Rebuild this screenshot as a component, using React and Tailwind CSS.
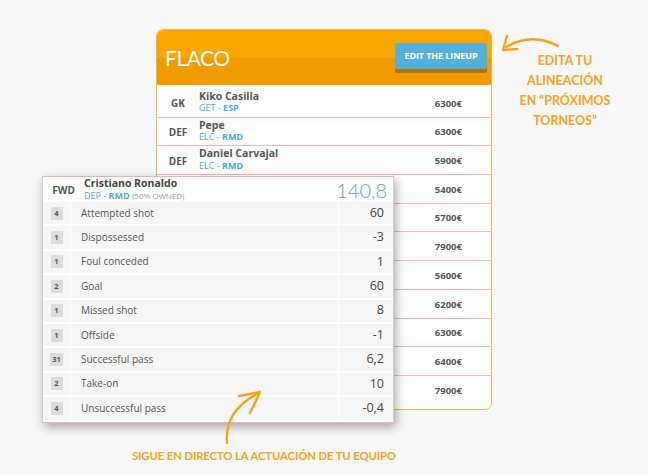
import React from "react";

const lineup = [
  { pos: "GK", name: "Kiko Casilla", a: "GET", b: "ESP", price: "6300€" },
  { pos: "DEF", name: "Pepe", a: "ELC", b: "RMD", price: "6300€" },
  { pos: "DEF", name: "Daniel Carvajal", a: "ELC", b: "RMD", price: "5900€" },
  { pos: "", name: "", a: "", b: "", price: "5400€" },
  { pos: "", name: "", a: "", b: "", price: "5700€" },
  { pos: "", name: "", a: "", b: "", price: "7900€" },
  { pos: "", name: "", a: "", b: "", price: "5600€" },
  { pos: "", name: "", a: "", b: "", price: "6200€" },
  { pos: "", name: "", a: "", b: "", price: "6300€" },
  { pos: "", name: "", a: "", b: "", price: "6400€" },
  { pos: "", name: "", a: "", b: "", price: "7900€" },
];

const stats = [
  ["4", "Attempted shot", "60"],
  ["1", "Dispossessed", "-3"],
  ["1", "Foul conceded", "1"],
  ["2", "Goal", "60"],
  ["1", "Missed shot", "8"],
  ["1", "Offside", "-1"],
  ["31", "Successful pass", "6,2"],
  ["2", "Take-on", "10"],
  ["4", "Unsuccessful pass", "-0,4"],
];

export default function App() {
  return (
    <div
      className="relative w-[648px] h-[475px] bg-[#f8f8f8] overflow-hidden"
      style={{ fontFamily: '"Open Sans", "Liberation Sans", sans-serif' }}
    >
      {/* Lineup card */}
      <div className="pt-[29px] pl-[156px]">
        <div className="w-[336px] h-[381px] rounded-[7px] border border-[#f6b450] bg-white overflow-hidden flex flex-col">
          <div className="h-[55px] shrink-0 flex items-center justify-between pl-[8px] pr-[4px] bg-[linear-gradient(to_bottom,#fca700_0,#fca700_50%,#f09b00_50%,#f09b00_100%)]">
            <span
              className="text-white text-[21px] leading-none tracking-[-0.5px]"
              style={{ fontFamily: 'Lato, "Open Sans", sans-serif' }}
            >
              FLACO
            </span>
            <div className="h-[26px] w-[92px] mt-[-3px] flex items-center justify-center bg-[#54b0da] rounded-[2px] shadow-[0_4px_0_rgba(90,70,30,0.45)] text-white text-[9px] font-bold tracking-[-0.1px]">
              EDIT THE LINEUP
            </div>
          </div>
          <div className="pt-[4px] flex flex-col">
            {lineup.map((r, i) => (
              <div
                key={i}
                className={`h-[28.7px] shrink-0 flex items-center ${
                  i < lineup.length - 1 ? "border-b border-[#f6b6b6]" : ""
                }`}
              >
                <div className="w-[42px] text-center text-[10px] font-bold text-[#555] mt-[2px]">
                  {r.pos}
                </div>
                <div className="flex flex-col mt-[-1px]">
                  <span className="text-[10.5px] leading-[12.5px] font-bold text-[#555]">{r.name}</span>
                  <span className="text-[9px] leading-[12.5px] text-[#4ea6dc]">
                    {r.a ? (
                      <>
                        {r.a} - <b className="font-bold">{r.b}</b>
                      </>
                    ) : null}
                  </span>
                </div>
                <div className="ml-auto pr-[29px] text-[9.5px] font-bold text-[#555] mt-[2px]">
                  {r.price}
                </div>
              </div>
            ))}
          </div>
        </div>
      </div>

      {/* Right annotation */}
      <div
        className="absolute left-[506px] top-[51px] w-[118px] text-center text-[12.5px] font-bold leading-[20px] text-[#f7a21b]"
        style={{ fontFamily: 'Lato, "Open Sans", sans-serif' }}
      >
        EDITA TU
        <br />
        ALINEACIÓN
        <br />
        EN “PRÓXIMOS
        <br />
        TORNEOS”
      </div>

      {/* Bottom annotation */}
      <div
        className="absolute left-0 top-[448px] w-[528px] text-center text-[11.3px] font-bold tracking-[-0.1px] text-[#f7a21b]"
        style={{ fontFamily: 'Lato, "Open Sans", sans-serif' }}
      >
        SIGUE EN DIRECTO LA ACTUACIÓN DE TU EQUIPO
      </div>

      {/* Stats panel */}
      <div className="absolute left-[42px] top-[176px] w-[352px] bg-white border-x border-[#cfcfcf] border-y border-y-[#f0b0b0] shadow-[2px_4px_10px_rgba(0,0,0,0.35)] flex flex-col">
        <div className="h-[25px] flex items-center bg-white">
          <div className="w-[41px] text-center text-[10px] font-bold text-[#555] mt-[2px]">FWD</div>
          <div className="flex flex-col">
            <span className="text-[10.5px] leading-[12.5px] font-bold text-[#444]">Cristiano Ronaldo</span>
            <span className="text-[9px] leading-[12.5px] text-[#4ea6dc]">
              DEP - <b className="font-bold">RMD</b>{" "}
              <span className="text-[8px] text-[#999]">(50% OWNED)</span>
            </span>
          </div>
          <div
            className="ml-auto pr-[6px] text-[20px] font-light leading-none text-[#5b9fd8]"
            style={{ fontFamily: 'Lato, "Open Sans", sans-serif' }}
          >
            140,8
          </div>
        </div>
        {stats.map((s, i) => (
          <div key={i} className="h-[24.4px] flex border-b-2 border-white bg-[#f6f6f6]">
            <div className="w-[28px] flex items-center justify-center border-r border-white">
              <span className="min-w-[12px] h-[13px] px-[2px] flex items-center justify-center bg-[#dcdcdc] text-[7.5px] font-bold text-[#555]">
                {s[0]}
              </span>
            </div>
            <div className="flex-1 flex items-center pl-[10px] text-[10px] text-[#555]">{s[1]}</div>
            <div className="w-[55px] flex items-center justify-end pr-[9px] border-l border-white text-[12.5px] font-medium text-[#444]">
              {s[2]}
            </div>
          </div>
        ))}
      </div>

      {/* Arrows */}
      <svg className="absolute left-0 top-0 pointer-events-none" width="648" height="475" viewBox="0 0 648 475" fill="none">
        <g stroke="#f7a21b" strokeWidth="2.4" strokeLinecap="round" strokeLinejoin="round">
          <path d="M558 46 Q 532 32 506 47" />
          <path d="M507 36 L503 50 L517 49" />
          <path d="M227 443 C 225 421 236 405 257 394" />
          <path d="M239 396 L260 392 L250 413" />
        </g>
      </svg>
    </div>
  );
}
